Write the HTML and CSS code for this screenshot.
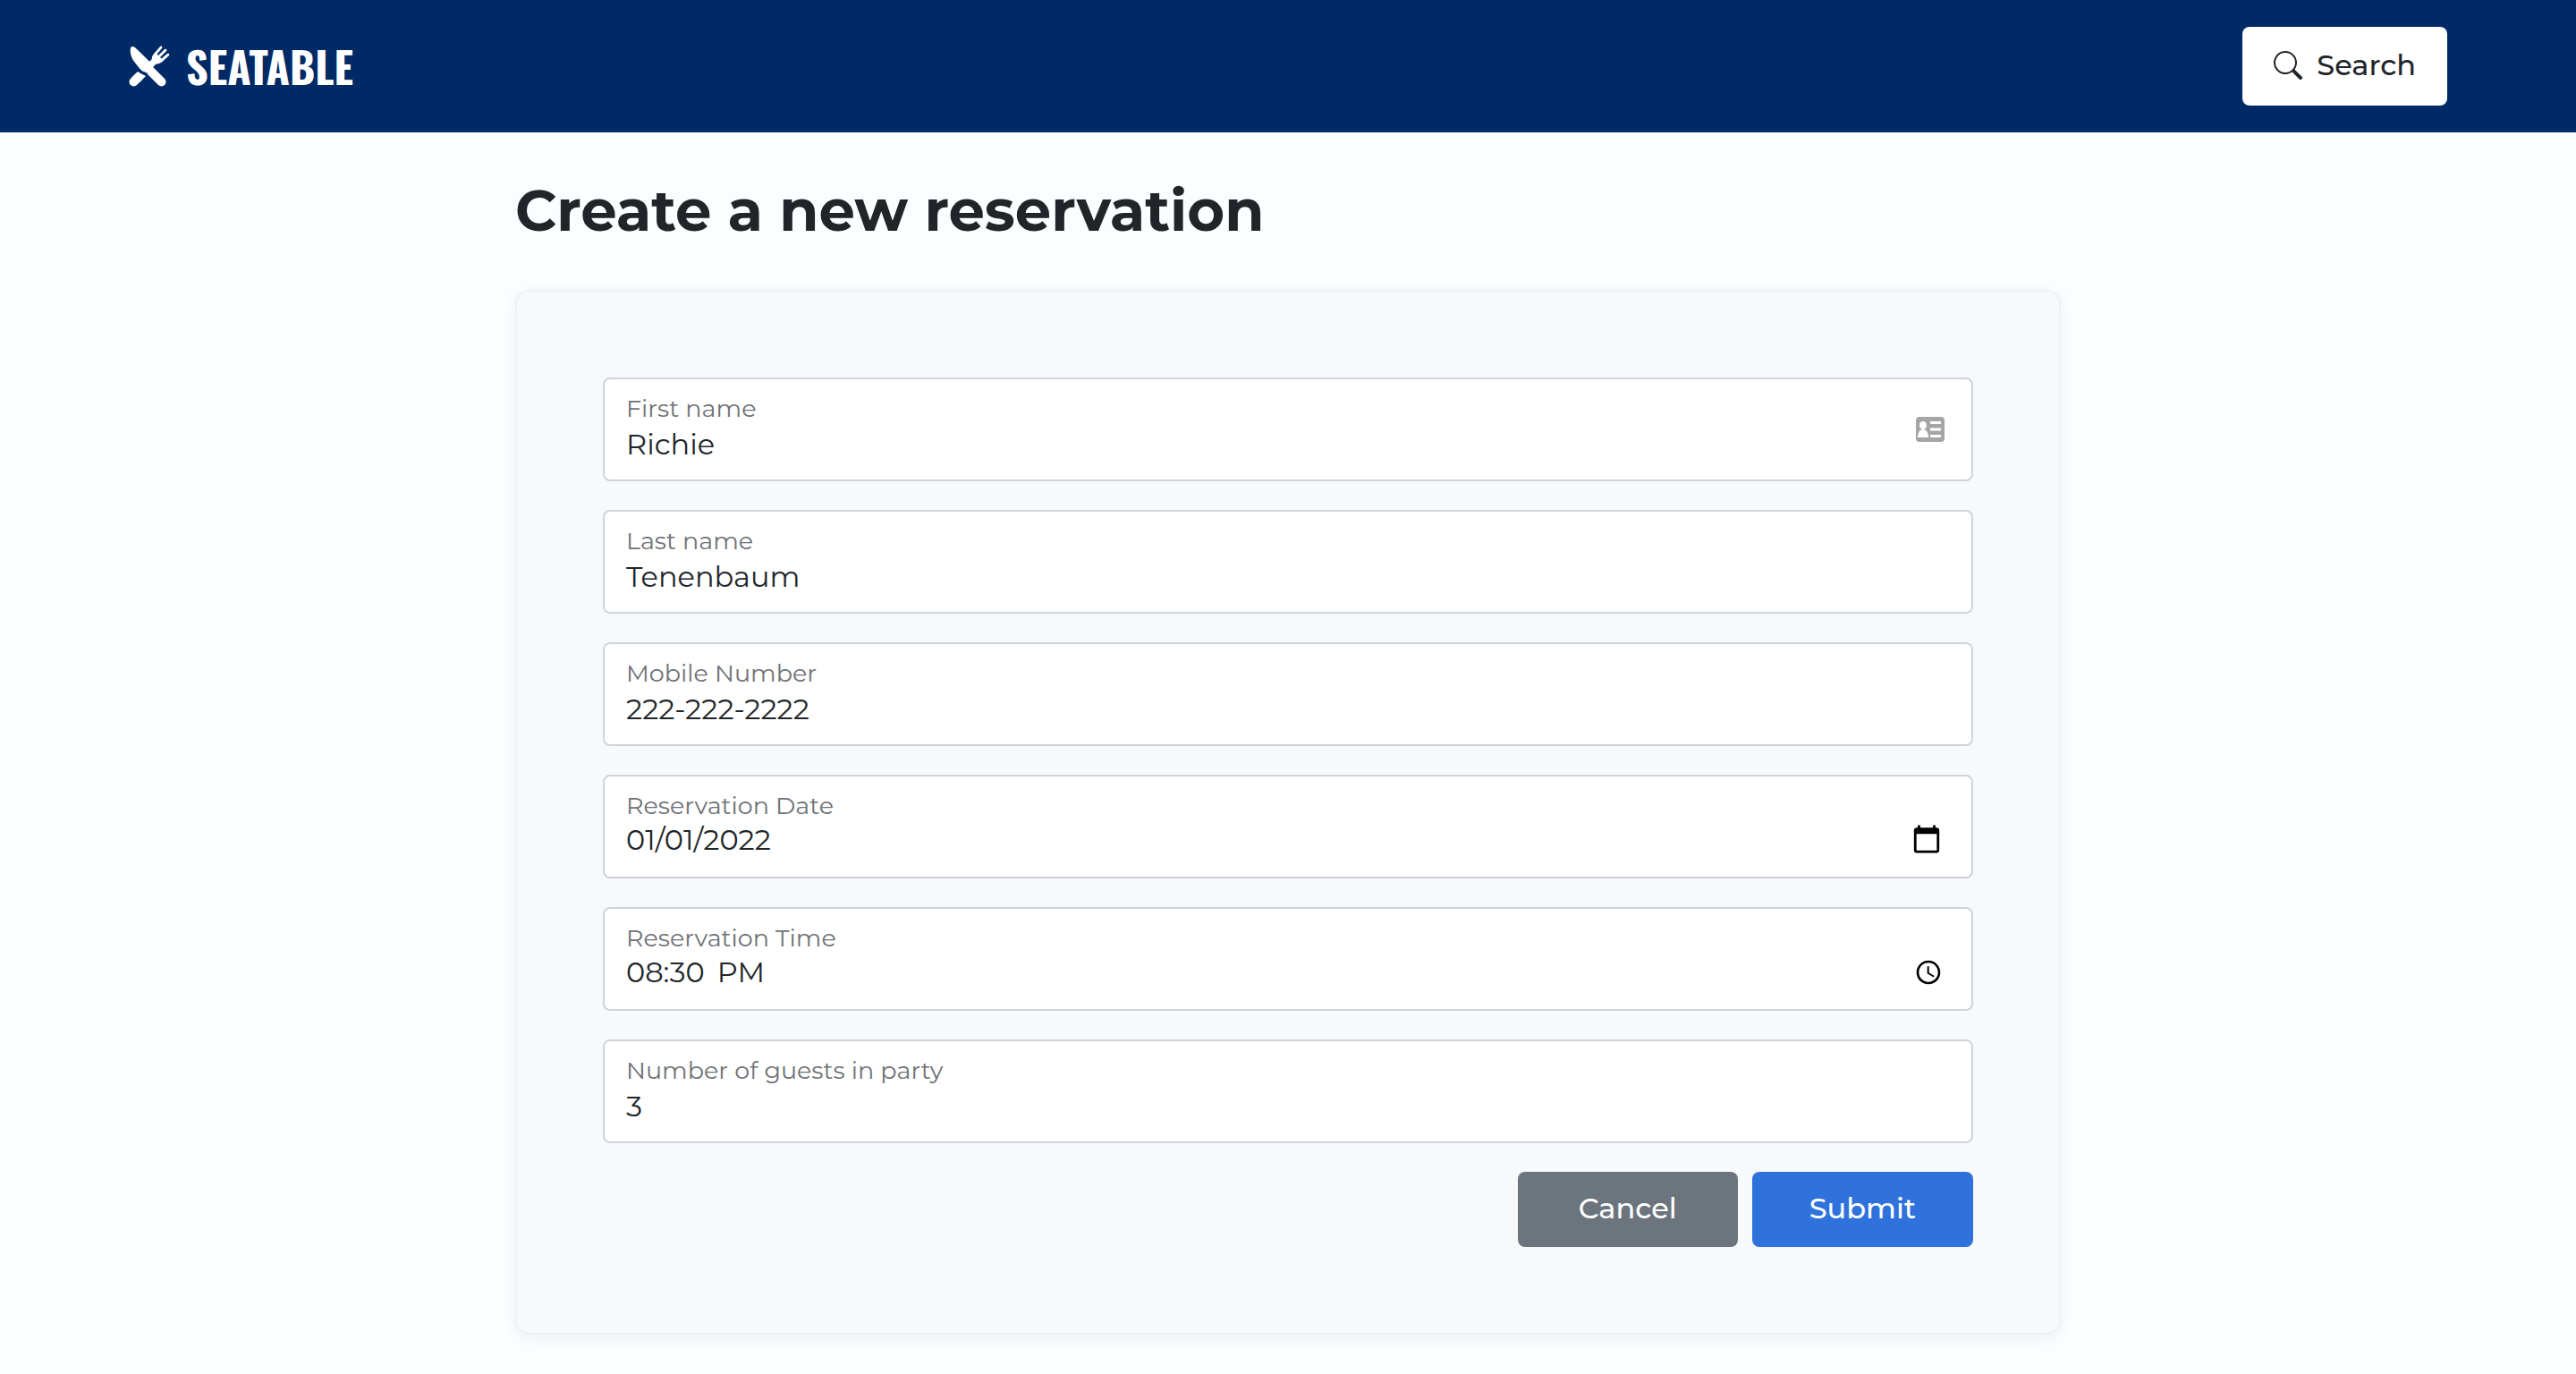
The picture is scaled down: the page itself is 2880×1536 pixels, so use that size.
FILE: index.html
```html
<!DOCTYPE html>
<html lang="en-US">
<head>
<meta charset="utf-8">
<meta name="viewport" content="width=device-width, initial-scale=1">
<title>Seatable – New reservation</title>
<link rel="stylesheet" href="styles.css">
</head>
<body>
<header class="navbar">
  <a class="brand" href="#">
    <svg class="brand-icon" viewBox="0 0 46 46" aria-hidden="true">
      <path fill="#fff" d="M2 2.500C3.500 0 6 1 8 3L26 20.500 20 29.500C17 30 14 28 12 25.500C8 20 0 13 2 2.500Z"/>
      <path fill="none" stroke="#fff" stroke-width="10" stroke-linecap="round" d="M22 26 36.500 40.500M5.500 40.500 11 35"/>
      <path fill="#fff" d="M10 29 19 34 12 41 3 36Z"/>
      <path fill="none" stroke="#fff" stroke-width="7" d="M24 22 30 16"/>
      <path fill="#fff" d="M26 17C25 13 27 10 29 8L35 1C37 0 38 1 37 3L31.500 9.500 33 11 40 4C42 3 43 5 42 6L35 13 36.500 14.500 43 9C45 8 46 10 45 11L38 17.500C35 20 32 21 29 20Z"/>
      <path fill="none" stroke="#002a66" stroke-width="2" d="M9 26C12 30 16 32.500 21 31.500"/>
    </svg>
    <span class="brand-name">SEATABLE</span>
  </a>
  <button class="btn btn-search" type="button">
    <svg class="search-icon" viewBox="0 0 16 16" aria-hidden="true"><path fill="currentColor" d="M11.742 10.344a6.500 6.500 0 1 0-1.397 1.398h-.001c.03.04.062.078.098.115l3.850 3.850a1 1 0 0 0 1.415-1.414l-3.850-3.850a1.007 1.007 0 0 0-.115-.1zM12 6.500a5.500 5.500 0 1 1-11 0 5.500 5.500 0 0 1 11 0z"/></svg>
    Search
  </button>
</header>
<main class="container">
  <h1 class="title">Create a new reservation</h1>
  <form class="card">
    <div class="field">
      <label for="first">First name</label>
      <input id="first" type="text" value="Richie">
      <svg class="autofill-icon" viewBox="0 0 32 28" aria-hidden="true">
        <rect width="32" height="28" rx="4" fill="#a5a5a5"/>
        <ellipse cx="8" cy="9.500" rx="4" ry="4.500" fill="#fff"/>
        <path fill="#fff" d="M2 23c0-5 2-9 6-9s6 4 6 9zM16 5h12v3H16zM16 12.500h12v3H16zM16 20h12v3H16z"/>
      </svg>
    </div>
    <div class="field">
      <label for="last">Last name</label>
      <input id="last" type="text" value="Tenenbaum">
    </div>
    <div class="field">
      <label for="mobile">Mobile Number</label>
      <input id="mobile" type="tel" value="222-222-2222">
    </div>
    <div class="field">
      <label for="date">Reservation Date</label>
      <input id="date" class="picker picker-date" type="date" value="2022-01-01">
    </div>
    <div class="field">
      <label for="time">Reservation Time</label>
      <input id="time" class="picker" type="time" value="20:30">
    </div>
    <div class="field">
      <label for="people">Number of guests in party</label>
      <input id="people" class="plain-number" type="number" value="3">
    </div>
    <div class="actions">
      <button class="btn btn-cancel" type="button">Cancel</button>
      <button class="btn btn-submit" type="submit">Submit</button>
    </div>
  </form>
</main>
</body>
</html>
```
FILE: styles.css
```css
* { box-sizing: border-box; }

body {
  margin: 0;
  background: #fcfdfe;
  color: #212529;
  font-family: Montserrat, Inter, sans-serif;
  font-size: 32px;
  line-height: 48px;
}

.navbar {
  display: flex;
  align-items: center;
  justify-content: space-between;
  padding: 30px 144px;
  background: #002a66;
}

.brand {
  display: flex;
  align-items: center;
  gap: 18px;
  color: #fff;
  text-decoration: none;
}

.brand-icon { width: 46px; height: 46px; }

.brand-name {
  font-family: Oswald, "Liberation Sans Narrow", "Liberation Sans", sans-serif;
  font-size: 48px;
  font-weight: 700;
}

.btn {
  border: 0;
  border-radius: 8px;
  padding: 17px 64px 19px;
  color: #fff;
  font: inherit;
  font-weight: 500;
}

.btn-search {
  display: flex;
  align-items: center;
  gap: 16px;
  padding: 19px 35px 21px;
  background: #fff;
  color: #212529;
}

.search-icon { width: 32px; height: 32px; }

.container {
  width: 60%;
  margin: 0 auto;
  padding: 47px 0 44px;
}

.title {
  margin: 0 0 49px;
  font-size: 64px;
  line-height: 80px;
  font-weight: 700;
}

.card {
  display: flex;
  flex-direction: column;
  gap: 32px;
  padding: 96px;
  border: 2px solid #eff1f7;
  border-radius: 16px;
  background: #f8f9fb;
  box-shadow: 0 4px 16px rgba(0, 0, 0, 0.06);
}

.field {
  position: relative;
  display: flex;
  flex-direction: column;
  padding: 15px 24px 17px;
  border: 2px solid #ced4da;
  border-radius: 8px;
  background: #fff;
}

.field label {
  color: #6f7275;
  font-size: 27px;
  line-height: 36px;
}

.field input {
  width: 100%;
  height: 44px;
  padding: 0;
  border: 0;
  outline: 0;
  background: transparent;
  color: inherit;
  font: inherit;
}

.plain-number { appearance: textfield; }

.field .picker { padding: 0 8px 4px 0; }

.picker::-webkit-calendar-picker-indicator {
  width: 32px;
  height: 32px;
  padding: 0;
}

.picker-date::-webkit-calendar-picker-indicator {
  width: 36px;
  height: 36px;
}

.picker::-webkit-datetime-edit-month-field,
.picker::-webkit-datetime-edit-day-field,
.picker::-webkit-datetime-edit-year-field,
.picker::-webkit-datetime-edit-hour-field,
.picker::-webkit-datetime-edit-minute-field {
  padding: 0;
}

.picker::-webkit-datetime-edit-ampm-field { padding: 0 0 0 10px; }

.autofill-icon {
  position: absolute;
  top: 50%;
  right: 30px;
  width: 32px;
  height: 28px;
  margin-top: -14px;
}

.actions {
  display: flex;
  justify-content: flex-end;
  gap: 16px;
}

.btn-cancel {
  padding-inline: 68px;
  background: #6c757d;
}

.btn-submit { background: #2f72dc; }
```
